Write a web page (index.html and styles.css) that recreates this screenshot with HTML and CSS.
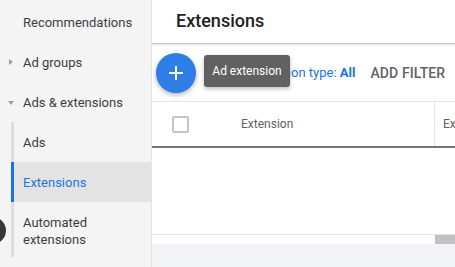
FILE: index.html
```html
<!DOCTYPE html>
<html lang="en">
<head>
  <meta charset="UTF-8">
  <meta name="viewport" content="width=device-width, initial-scale=1.0">
  <title>Extensions</title>
  <link rel="stylesheet" href="styles.css">
</head>
<body>
  <div class="app">
    <nav class="sidebar">
      <div class="nav-item">Recommendations</div>
      <div class="nav-item"><span class="caret caret-right"></span>Ad groups</div>
      <div class="nav-item"><span class="caret caret-down"></span>Ads &amp; extensions</div>
      <div class="sub-nav">
        <div class="sub-item">Ads</div>
        <div class="sub-item active">Extensions</div>
        <div class="sub-item two-line">Automated<br>extensions</div>
      </div>
      <div class="help-dot"></div>
    </nav>

    <main class="main">
      <header class="page-header">
        <h1>Extensions</h1>
      </header>

      <div class="toolbar">
        <button class="fab" aria-label="Add">
          <svg width="18" height="18" viewBox="0 0 18 18"><path d="M9 2v14M2 9h14" stroke="#fff" stroke-width="2"/></svg>
        </button>
        <div class="filter">Extension type: <b>All</b></div>
        <div class="add-filter">ADD FILTER</div>
        <div class="tooltip">Ad extension</div>
      </div>

      <div class="table">
        <div class="table-head">
          <div class="cell cell-check"><span class="checkbox"></span></div>
          <div class="cell cell-ext">Extension</div>
          <div class="cell cell-next">Ex</div>
        </div>
        <div class="table-body"></div>
        <div class="scrollbar"><span class="thumb"></span></div>
      </div>
      <div class="footer"></div>
    </main>
  </div>
</body>
</html>
```

FILE: styles.css
```css
/* page */
body {
  margin: 0;
  font-family: Roboto, "Liberation Sans", Arial, sans-serif;
  color: #3c4043;
  background: #fff;
  overflow: hidden;
}

.app {
  display: flex;
  height: 267px;
  width: 455px;
  overflow: hidden;
}

/* sidebar */
.sidebar {
  position: relative;
  width: 151px;
  flex-shrink: 0;
  background: #f4f4f4;
  border-right: 1px solid #e3e3e3;
  padding-top: 2px;
  font-size: 13px;
}

.nav-item {
  height: 40px;
  display: flex;
  align-items: center;
  padding-left: 23px;
  position: relative;
}

.caret {
  position: absolute;
  left: 9px;
  top: 17px;
  width: 0;
  height: 0;
}

.caret-right {
  border-top: 3px solid transparent;
  border-bottom: 3px solid transparent;
  border-left: 4px solid #9e9e9e;
}

.caret-down {
  top: 19px;
  left: 8px;
  border-left: 3px solid transparent;
  border-right: 3px solid transparent;
  border-top: 4px solid #9e9e9e;
}

.sub-nav {
  margin-left: 11px;
  border-left: 3px solid #dcdcdc;
}

.sub-item {
  height: 40px;
  display: flex;
  align-items: center;
  padding-left: 9px;
}

.sub-item.active {
  background: #e3e3e3;
  color: #1a73e8;
  margin-left: -3px;
  padding-left: 9px;
  border-left: 3px solid #1a73e8;
}

.sub-item.two-line {
  height: 55px;
  line-height: 17px;
  align-items: flex-start;
  padding-top: 12px;
  box-sizing: border-box;
}

.help-dot {
  position: absolute;
  left: -21px;
  top: 217px;
  width: 27px;
  height: 27px;
  border-radius: 50%;
  background: #383838;
}

/* main */
.main {
  flex: 1;
  min-width: 0;
  display: flex;
  flex-direction: column;
  background: #fff;
}

.page-header {
  height: 43px;
  border-bottom: 1px solid #c8c8c8;
  box-shadow: 0 1px 2px rgba(0, 0, 0, 0.15);
  display: flex;
  align-items: center;
  padding-left: 24px;
  flex-shrink: 0;
}

.page-header h1 {
  margin: 0;
  font-size: 18px;
  font-weight: 500;
  color: #202124;
  padding-bottom: 3px;
}

.toolbar {
  position: relative;
  height: 57px;
  display: flex;
  align-items: center;
  padding-left: 4px;
  flex-shrink: 0;
}

.fab {
  width: 40px;
  height: 40px;
  border-radius: 50%;
  border: none;
  background: #2f7de6;
  box-shadow: 0 2px 5px rgba(0, 0, 0, 0.3);
  display: flex;
  align-items: center;
  justify-content: center;
  padding: 0;
  margin-top: 1px;
}

.filter {
  margin-left: 53px;
  font-size: 13px;
  color: #1a73e8;
  white-space: nowrap;
}

.filter b {
  font-weight: 700;
}

.add-filter {
  margin-left: 15px;
  font-size: 14px;
  font-weight: 500;
  color: #5f6368;
  letter-spacing: 0.1px;
  white-space: nowrap;
}

.tooltip {
  position: absolute;
  left: 52px;
  top: 11px;
  width: 86px;
  height: 32px;
  box-sizing: border-box;
  background: #616161;
  color: #fff;
  font-size: 12px;
  border-radius: 3px;
  display: flex;
  align-items: center;
  justify-content: center;
  box-shadow: 0 2px 4px rgba(0, 0, 0, 0.25);
}

/* table */
.table {
  border-top: 1px solid #e3e3e3;
  flex-shrink: 0;
}

.table-head {
  display: flex;
  height: 44px;
  border-bottom: 2px solid #757575;
  font-size: 12px;
  color: #5f6368;
  white-space: nowrap;
}

.cell {
  display: flex;
  align-items: center;
}

.cell-check {
  width: 89px;
  padding-left: 20px;
  box-sizing: border-box;
  flex-shrink: 0;
}

.checkbox {
  width: 13px;
  height: 13px;
  border: 2px solid #c4c4c4;
  border-radius: 2px;
}

.cell-ext {
  width: 193px;
  flex-shrink: 0;
  border-right: 1px solid #e3e3e3;
}

.cell-next {
  padding-left: 8px;
}

.table-body {
  height: 86px;
  border-bottom: 1px solid #e3e3e3;
}

.scrollbar {
  height: 9px;
  position: relative;
}

.thumb {
  position: absolute;
  left: 283px;
  top: 0;
  width: 40px;
  height: 9px;
  background: #c1c1c1;
}

.footer {
  flex: 1;
  background: #f1f3f4;
}
```
